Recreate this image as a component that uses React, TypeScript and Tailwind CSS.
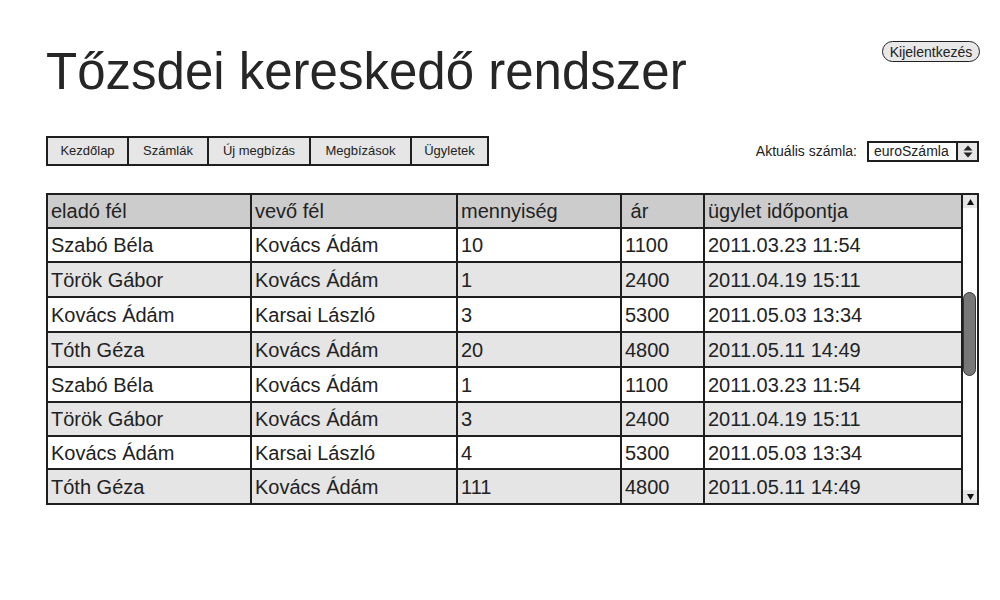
import React from 'react';

const NAV = [
  { label: 'Kezdőlap', w: 'w-[81px] border-r-2' },
  { label: 'Számlák', w: 'w-[80px] border-r-2' },
  { label: 'Új megbízás', w: 'w-[102px] border-r-2' },
  { label: 'Megbízások', w: 'w-[101px] border-r-2' },
  { label: 'Ügyletek', w: 'w-[75px]' },
];

const HEAD = ['eladó fél', 'vevő fél', 'mennyiség', '\u00a0ár', 'ügylet időpontja'];

const ROWS = [
  ['Szabó Béla', 'Kovács Ádám', '10', '1100', '2011.03.23 11:54'],
  ['Török Gábor', 'Kovács Ádám', '1', '2400', '2011.04.19 15:11'],
  ['Kovács Ádám', 'Karsai László', '3', '5300', '2011.05.03 13:34'],
  ['Tóth Géza', 'Kovács Ádám', '20', '4800', '2011.05.11 14:49'],
  ['Szabó Béla', 'Kovács Ádám', '1', '1100', '2011.03.23 11:54'],
  ['Török Gábor', 'Kovács Ádám', '3', '2400', '2011.04.19 15:11'],
  ['Kovács Ádám', 'Karsai László', '4', '5300', '2011.05.03 13:34'],
  ['Tóth Géza', 'Kovács Ádám', '111', '4800', '2011.05.11 14:49'],
];

// row heights incl. bottom border, header first
const HEIGHTS = ['h-[34px]', 'h-[34px]', 'h-[35px]', 'h-[35px]', 'h-[35px]', 'h-[35px]', 'h-[34px]', 'h-[33px]', 'h-[33px]'];

const Row = ({ cells, bg, h, last }: { cells: string[]; bg: string; h: string; last?: boolean }) => (
  <div
    className={`grid grid-cols-[204px_206px_164px_83px_1fr] border-[#1e1e1e] ${h} ${bg} ${last ? '' : 'border-b-2'}`}
  >
    {cells.map((c, i) => (
      <div
        key={i}
        className={`flex items-center pl-[3px] text-[20px] text-[#222] whitespace-pre border-[#1e1e1e] ${i < 4 ? 'border-r-2' : ''}`}
      >
        {c}
      </div>
    ))}
  </div>
);

export default function App() {
  return (
    <div className="w-[1000px] h-[600px] bg-white font-['Liberation_Sans',Arial,sans-serif] text-[#222]">
      {/* Header */}
      <div className="flex items-start justify-between pl-[46px] pr-[20px] pt-[41px]">
        <h1 className="mt-[5px] text-[51px] leading-[51px] text-[#262626]">Tőzsdei kereskedő rendszer</h1>
        <button className="h-[21px] w-[98px] rounded-full border-[1.5px] border-[#222] bg-[#e8e8e8] text-[14px] leading-none text-[#222]">
          Kijelentkezés
        </button>
      </div>

      {/* Nav + account */}
      <div className="mt-[39px] flex items-center justify-between pl-[46px] pr-[21px]">
        <div className="flex h-[30px] border-2 border-[#1e1e1e] bg-[#e6e6e6]">
          {NAV.map((n) => (
            <div
              key={n.label}
              className={`flex items-center justify-center border-[#1e1e1e] text-[13px] text-[#222] ${n.w}`}
            >
              {n.label}
            </div>
          ))}
        </div>
        <div className="flex items-center gap-[10px]">
          <span className="text-[14px] text-[#222]">Aktuális számla:</span>
          <div className="flex h-[21px] w-[112px] border-2 border-[#1e1e1e] bg-white">
            <div className="flex flex-1 items-center pl-[5px] text-[14px] text-[#222]">euroSzámla</div>
            <div className="flex w-[21px] items-center justify-center border-l-2 border-[#1e1e1e] bg-[#e6e6e6]">
              <svg width="10" height="13" viewBox="0 0 10 13">
                <path d="M5 0.5 L9.5 5.5 H0.5 Z" fill="#222" />
                <path d="M5 12.5 L9.5 7.5 H0.5 Z" fill="#222" />
              </svg>
            </div>
          </div>
        </div>
      </div>

      {/* Table + scrollbar */}
      <div className="mt-[27px] ml-[46px] flex">
        <div className="w-[917px] border-2 border-[#1e1e1e]">
          <Row cells={HEAD} bg="bg-[#cccccc]" h={HEIGHTS[0]} />
          {ROWS.map((r, i) => (
            <Row
              key={i}
              cells={r}
              h={HEIGHTS[i + 1]}
              bg={i % 2 === 0 ? 'bg-white' : 'bg-[#e5e5e5]'}
              last={i === ROWS.length - 1}
            />
          ))}
        </div>
        <div className="flex w-[16px] flex-col border-y-2 border-r-2 border-[#1e1e1e] bg-white">
          <div className="flex h-[13px] items-center justify-center bg-[#e6e6e6]">
            <svg width="7" height="6" viewBox="0 0 7 6">
              <path d="M3.5 0 L7 6 H0 Z" fill="#111" />
            </svg>
          </div>
          <div className="flex-1 pt-[84px]">
            <div className="h-[84px] w-[13px] rounded-full border border-[#333] bg-[#777]" />
          </div>
          <div className="flex h-[13px] items-center justify-center bg-[#e6e6e6]">
            <svg width="7" height="6" viewBox="0 0 7 6">
              <path d="M3.5 6 L7 0 H0 Z" fill="#111" />
            </svg>
          </div>
        </div>
      </div>
    </div>
  );
}
